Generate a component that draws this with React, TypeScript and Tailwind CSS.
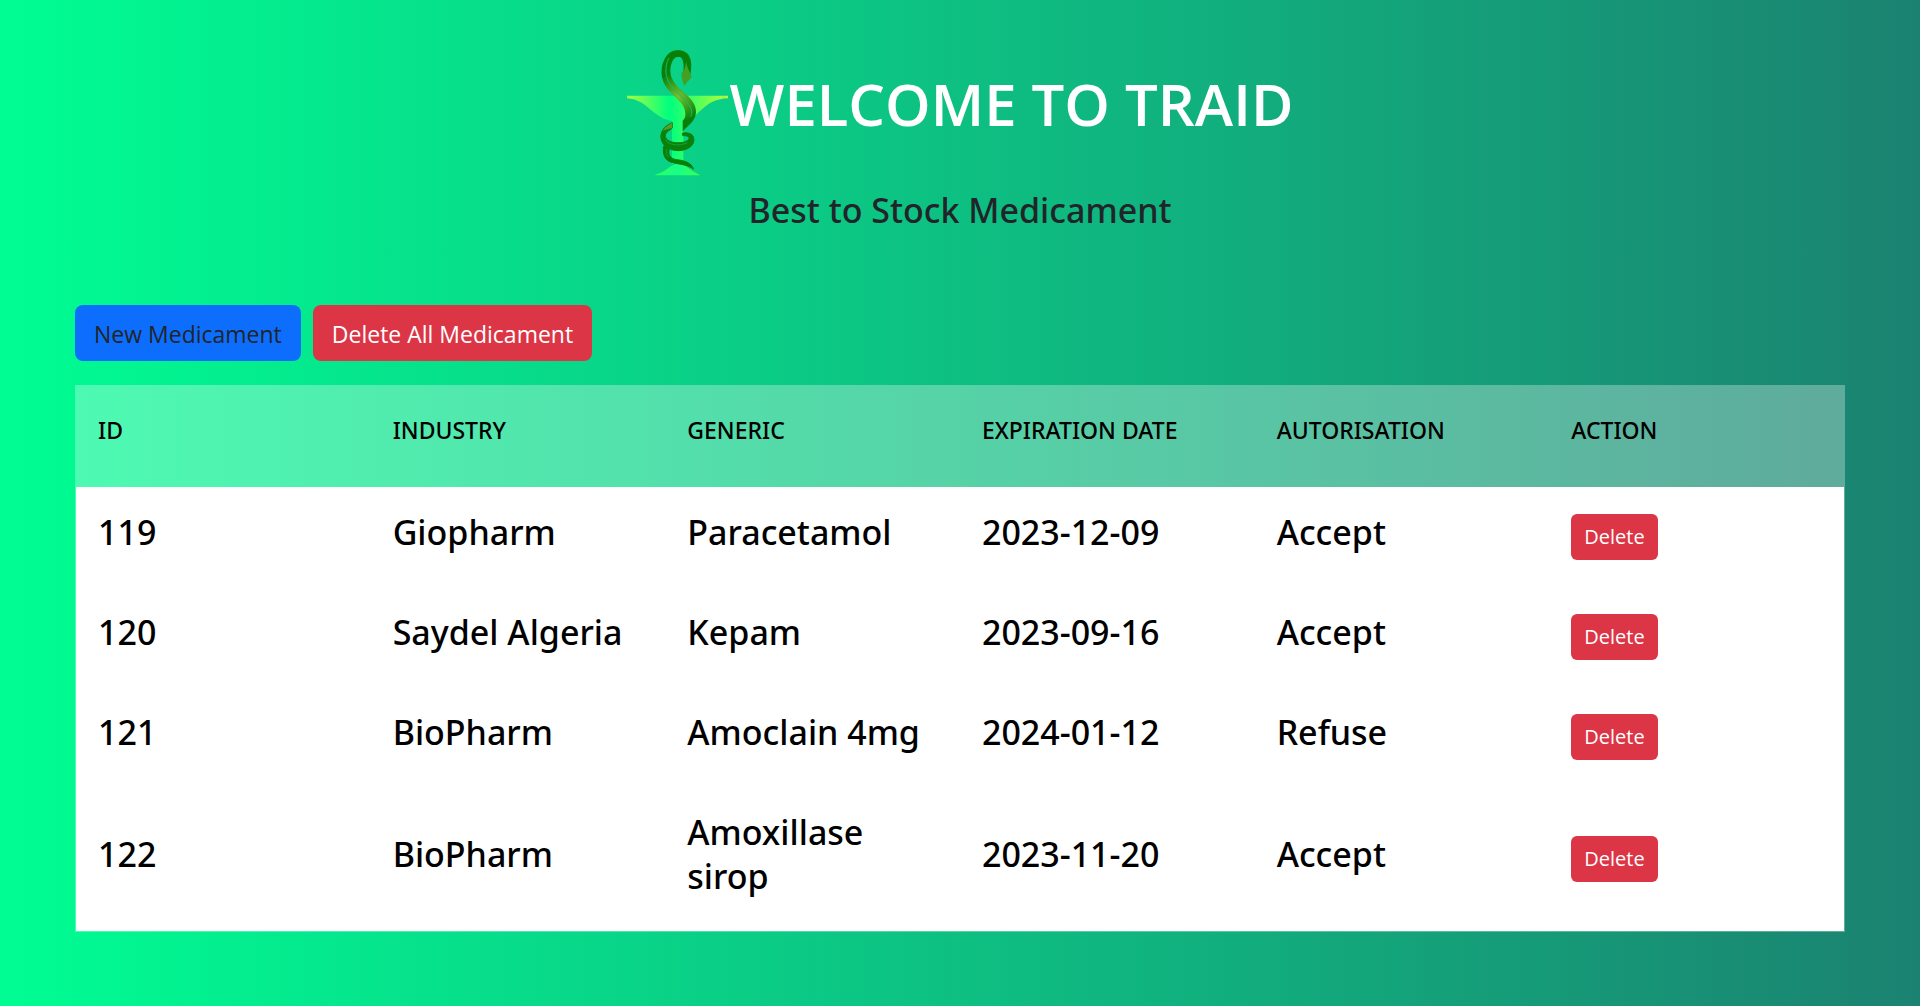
import React from "react";

const medicaments = [
  { id: 119, industry: "Giopharm", generic: "Paracetamol", date: "2023-12-09", autorisation: "Accept" },
  { id: 120, industry: "Saydel Algeria", generic: "Kepam", date: "2023-09-16", autorisation: "Accept" },
  { id: 121, industry: "BioPharm", generic: "Amoclain 4mg", date: "2024-01-12", autorisation: "Refuse" },
  { id: 122, industry: "BioPharm", generic: "Amoxillase sirop", date: "2023-11-20", autorisation: "Accept" },
];

const columns = ["ID", "Industry", "Generic", "Expiration date", "Autorisation", "Action"];

function Logo() {
  return (
    <svg viewBox="36 28 303 378" className="h-[126px] w-[101px]" aria-hidden="true">
      <defs>
        <linearGradient id="cup" x1="0" x2="1">
          <stop offset="0" stopColor="#a8ff3c" />
          <stop offset="0.42" stopColor="#00ff80" />
          <stop offset="0.58" stopColor="#30ff68" />
          <stop offset="1" stopColor="#b4ff38" />
        </linearGradient>
        <linearGradient id="foot" x1="0" x2="1">
          <stop offset="0" stopColor="#2cff5c" />
          <stop offset="0.5" stopColor="#18ff88" />
          <stop offset="1" stopColor="#3cff50" />
        </linearGradient>
        <radialGradient id="snake" gradientUnits="userSpaceOnUse" cx="190" cy="168" r="75">
          <stop offset="0" stopColor="#78c030" />
          <stop offset="1" stopColor="#088008" />
        </radialGradient>
      </defs>
      <path d="M36 165H339V173C300 174 278 190 256 210C236 229 220 239 205 241V370H171V241C146 238 128 224 108 208C84 187 66 175 36 173Z" fill="url(#cup)" />
      <path d="M120 404C122 399 136 400 150 389C170 374 180 369 192 369C207 369 215 378 228 388C240 397 251 399 255 404Z" fill="url(#foot)" />
      {/* lower coils around the stem */}
      <path d="M172 246C146 256 133 276 139 298C146 321 170 330 190 330C222 329 241 312 236 291C233 279 219 275 203 277V285C216 284 224 289 222 295C217 304 200 307 184 306C163 305 149 295 151 283C153 273 165 269 172 262Z" fill="#0a820a" stroke="#0a820a" strokeWidth="3" />
      <path d="M172 246C158 252 148 261 143 272C151 266 164 264 172 262Z" fill="#5a9c28" />
      <path d="M146 316C142 342 149 361 176 367C197 371 215 372 236 385C229 366 207 359 184 357C165 354 158 341 163 325Z" fill="#088008" stroke="#088008" strokeWidth="3" />
      <path d="M151 297C160 313 191 318 217 306M154 325C153 335 155 343 160 349" fill="none" stroke="#1fae4c" strokeWidth="2" />
      {/* upper body and head */}
      <path d="M205 267C222 250 239 240 241 216C242 179 207 162 184 137C166 117 160 99 165 77C169 56 179 46 191 46C205 47 210 65 207 94L225 97C231 57 222 30 188 30C151 31 137 78 143 109C149 142 175 160 196 181C214 199 219 229 205 241Z" fill="url(#snake)" stroke="url(#snake)" strokeWidth="4" />
      <path d="M162 52C147 78 151 111 166 133C186 160 215 177 226 199C232 211 231 220 227 228" fill="none" stroke="#10bd72" strokeWidth="3" />
      <path d="M213 63L217 78L230 108C225 117 214 124 208 135C203 124 199 110 199 97C206 94 211 83 213 63Z" fill="#459f22" />
    </svg>
  );
}

export default function App() {
  return (
    <div className="min-h-screen bg-linear-to-r/srgb from-[#00fd93] to-[#1b8271] font-['Noto_Sans','Open_Sans',sans-serif] text-[#212529]">
      <header className="flex flex-col items-center pt-[50px]">
        <div className="flex items-start justify-center gap-[2px]">
          <Logo />
          <h1 className="mt-[18px] font-['Open_Sans','Noto_Sans',sans-serif] text-[58px]/[72px] font-semibold text-white">WELCOME TO TRAID</h1>
        </div>
        <h2 className="mt-3 text-[34px]/[44px] font-medium">Best to Stock Medicament</h2>
      </header>
      <main className="px-[75px] pt-[73px] pb-[73px]">
        <div className="flex gap-3 font-['Open_Sans','Noto_Sans',sans-serif]">
          <button type="button" className="rounded-lg bg-[#0d6efd] px-[19px] pt-[11px] pb-[9px] text-[23px]/[36px]">New Medicament</button>
          <button type="button" className="rounded-lg bg-[#dc3545] px-[19px] pt-[11px] pb-[9px] text-[23px]/[36px] text-white">Delete All Medicament</button>
        </div>
        <div className="mt-6 border border-white/30">
          <table className="w-full table-fixed border-collapse text-left text-black">
            <thead className="bg-white/30">
              <tr>
                {columns.map((c) => (
                  <th key={c} scope="col" className="px-[22px] pt-[30px] pb-[42px] text-[23px]/[29px] font-medium uppercase">{c}</th>
                ))}
              </tr>
            </thead>
            <tbody className="bg-white">
              {medicaments.map((m) => (
                <tr key={m.id} className="text-[34px]/[44px] font-medium">
                  <td className="px-[22px] pt-[23px] pb-[33px]">{m.id}</td>
                  <td className="px-[22px] pt-[23px] pb-[33px]">{m.industry}</td>
                  <td className="px-[22px] pt-[23px] pb-[33px]">{m.generic}</td>
                  <td className="px-[22px] pt-[23px] pb-[33px]">{m.date}</td>
                  <td className="px-[22px] pt-[23px] pb-[33px]">{m.autorisation}</td>
                  <td className="px-[22px] py-[27px]">
                    <button type="button" className="block rounded-md bg-[#dc3545] px-[13px] py-[7px] font-['Open_Sans','Noto_Sans',sans-serif] text-[20px]/[32px] font-normal text-white">Delete</button>
                  </td>
                </tr>
              ))}
            </tbody>
          </table>
        </div>
      </main>
    </div>
  );
}
